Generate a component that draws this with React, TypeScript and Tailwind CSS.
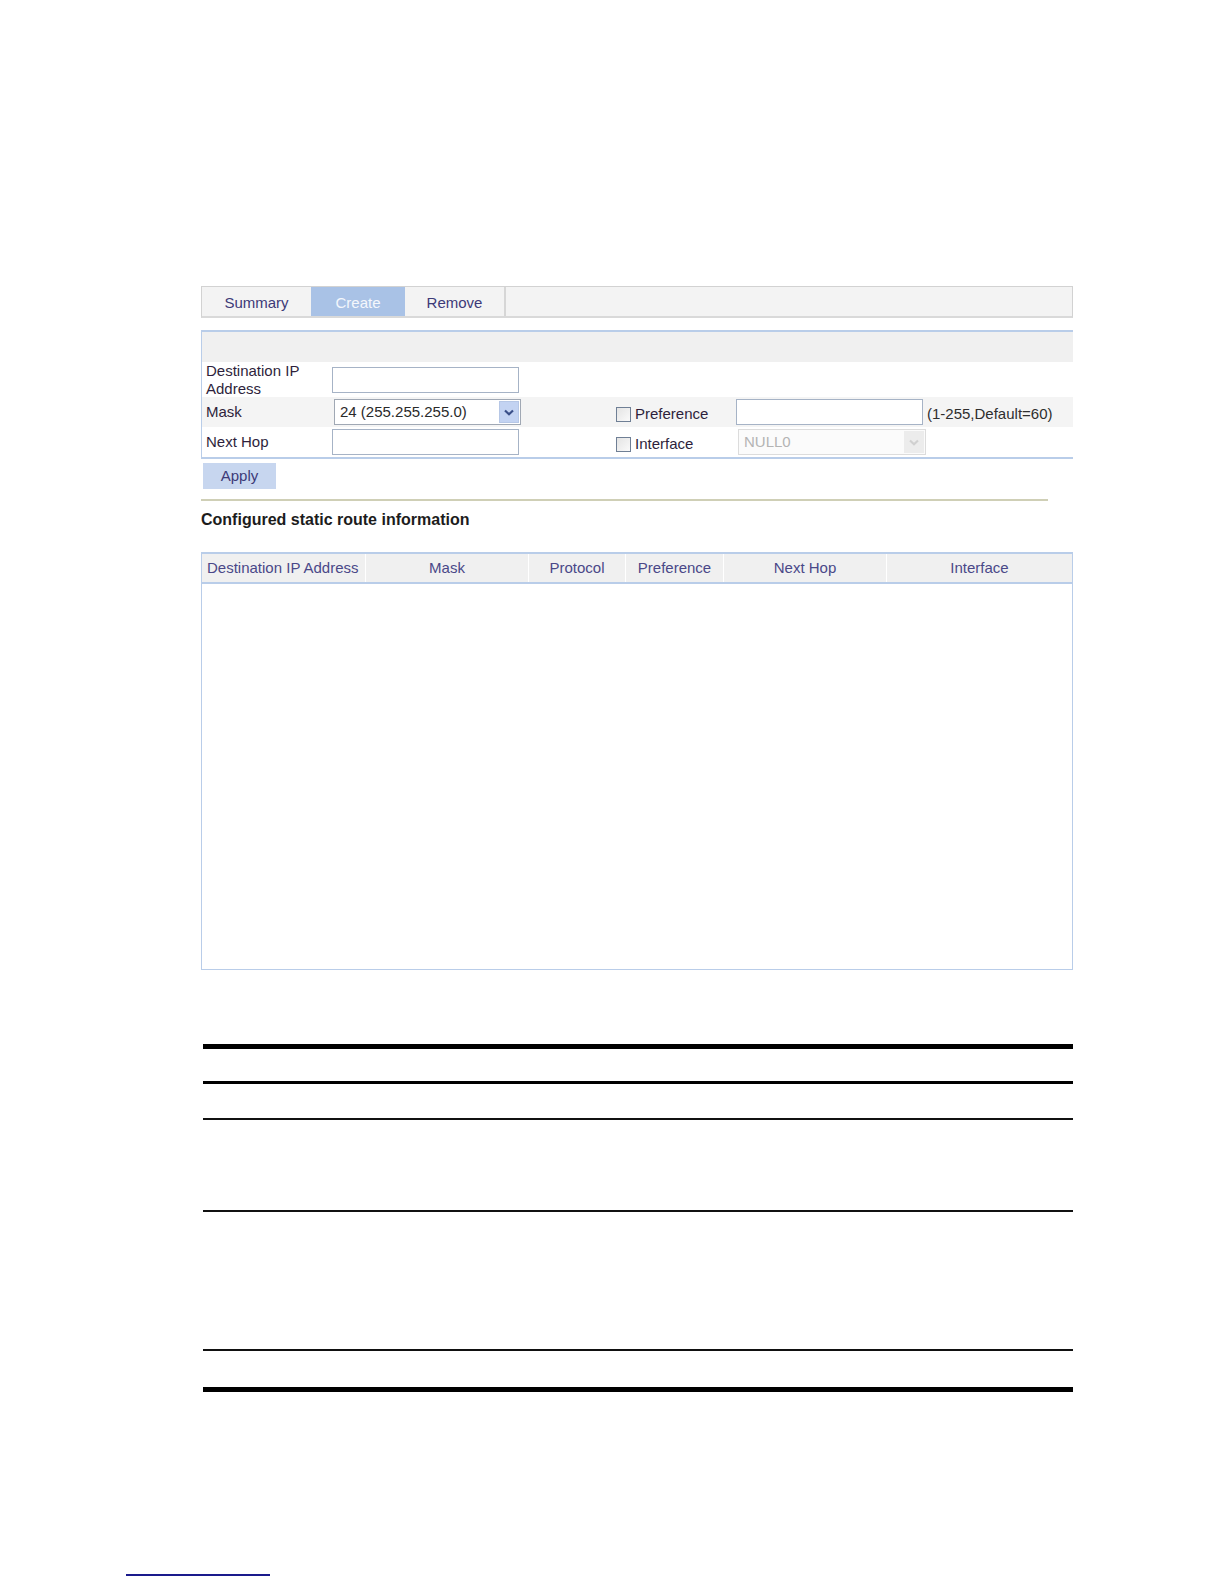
import React from "react";

const labelText = "text-[15px] text-[#2e1f3c]";

function Checkbox() {
  return (
    <span className="inline-block h-[15px] w-[15px] shrink-0 border border-[#6f7f95] bg-gradient-to-br from-[#e4e4e4] to-[#fafafa]" />
  );
}

function Chevron({ color }: { color: string }) {
  return (
    <svg width="10" height="7" viewBox="0 0 10 7">
      <path d="M1 1.5 L5 5.2 L9 1.5" fill="none" stroke={color} strokeWidth="2.2" />
    </svg>
  );
}

function TextBox({ w }: { w: string }) {
  return <div className={`${w} h-[26px] border border-[#a6b3c6] bg-white`} />;
}

const columns = [
  { name: "Destination IP Address", w: "w-[164px]", align: "justify-start pl-[5px]" },
  { name: "Mask", w: "w-[163px]", align: "justify-center" },
  { name: "Protocol", w: "w-[97px]", align: "justify-center" },
  { name: "Preference", w: "w-[98px]", align: "justify-center" },
  { name: "Next Hop", w: "w-[163px]", align: "justify-center" },
  { name: "Interface", w: "flex-1", align: "justify-center" },
];

export default function App() {
  return (
    <div className="h-[1584px] w-full overflow-hidden bg-white pt-[286px] font-['Liberation_Sans',Arial,sans-serif]">
      <div className="ml-[201px] w-[872px]">
        {/* Tabs */}
        <div className="flex h-[32px] border-t border-l border-r border-[#d2d2d2] border-b-2 border-b-[#d9d9d9] bg-[#f3f3f3] text-[15px]">
          <div className="flex w-[109px] items-center justify-center pt-[3px] text-[#3d3a78]">Summary</div>
          <div className="flex w-[94px] items-center justify-center bg-[#a9c2e6] pt-[3px] text-[#f4f7fc]">Create</div>
          <div className="flex w-[101px] items-center justify-center border-r-2 border-[#d6d6d6] pt-[3px] text-[#3d3a78]">Remove</div>
          <div className="flex-1" />
        </div>

        {/* Form panel */}
        <div className="mt-[12px] border-t-2 border-b-2 border-l border-[#b9cde9]">
          <div className="h-[30px] bg-[#f0f0f0]" />

          <div className="flex h-[35px] items-center">
            <div className={`w-[130px] pl-[4px] leading-[18px] ${labelText}`}>
              Destination IP
              <br />
              Address
            </div>
            <TextBox w="w-[187px]" />
          </div>

          <div className="flex h-[30px] items-center bg-[#f4f4f4]">
            <div className={`w-[130px] pl-[4px] ${labelText}`}>Mask</div>
            <div className="ml-[2px] flex h-[26px] w-[187px] items-center border border-[#a0a8b4] bg-white">
              <span className="flex-1 pl-[5px] text-[15px] text-[#2a2a2a]">24 (255.255.255.0)</span>
              <span className="mr-[1px] flex h-[22px] w-[20px] items-center justify-center border border-[#b6c7e6] bg-[#c3d3f2]">
                <Chevron color="#3a4f88" />
              </span>
            </div>
            <div className="ml-[95px] mt-[4px] flex w-[120px] items-center">
              <Checkbox />
              <span className={`ml-[4px] ${labelText}`}>Preference</span>
            </div>
            <div className="h-[26px] w-[187px] border border-[#a6b3c6] bg-white" />
            <span className="ml-[4px] mt-[4px] text-[15px] text-[#2e2e2e]">(1-255,Default=60)</span>
          </div>

          <div className="flex h-[30px] items-center">
            <div className={`w-[130px] pl-[4px] ${labelText}`}>Next Hop</div>
            <TextBox w="w-[187px]" />
            <div className="ml-[97px] mt-[4px] flex w-[122px] items-center">
              <Checkbox />
              <span className={`ml-[4px] ${labelText}`}>Interface</span>
            </div>
            <div className="flex h-[26px] w-[188px] items-center border border-[#dcdcdc] bg-[#fbfbfb]">
              <span className="flex-1 pl-[5px] text-[15px] text-[#b4b4b4]">NULL0</span>
              <span className="mr-[1px] flex h-[22px] w-[20px] items-center justify-center bg-[#ececec]">
                <Chevron color="#d0d0d0" />
              </span>
            </div>
          </div>
        </div>

        <button className="ml-[2px] mt-[4px] flex h-[26px] w-[73px] items-center justify-center bg-[#c7d6ef] text-[15px] text-[#3d3a78]">
          Apply
        </button>

        <div className="mt-[10px] h-[2px] w-[847px] bg-[#cfcfb6]" />

        <h2 className="mt-[10px] text-[16px] font-bold leading-[18px] text-[#1c1c1c]">
          Configured static route information
        </h2>

        {/* Table */}
        <div className="mt-[23px] h-[418px] border border-t-2 border-[#b9cde9]">
          <div className="flex h-[30px] border-b-2 border-[#b9cde9] bg-[#f0f0f0] text-[15px] text-[#4a4888]">
            {columns.map((c, i) => (
              <div
                key={c.name}
                className={`flex items-center ${c.w} ${c.align} ${i < columns.length - 1 ? "border-r border-white" : ""}`}
              >
                {c.name}
              </div>
            ))}
          </div>
        </div>

        {/* Document table rules */}
        <div className="ml-[2px] mt-[74px] w-[870px]">
          <div className="h-[5px] bg-black" />
          <div className="mt-[32px] h-[3px] bg-black" />
          <div className="mt-[34px] h-[2px] bg-[#111]" />
          <div className="mt-[90px] h-[2px] bg-[#111]" />
          <div className="mt-[137px] h-[2px] bg-[#111]" />
          <div className="mt-[36px] h-[5px] bg-black" />
        </div>
      </div>

      <div className="ml-[126px] mt-[182px] h-[2px] w-[144px] bg-[#1a1a8c]" />
    </div>
  );
}
